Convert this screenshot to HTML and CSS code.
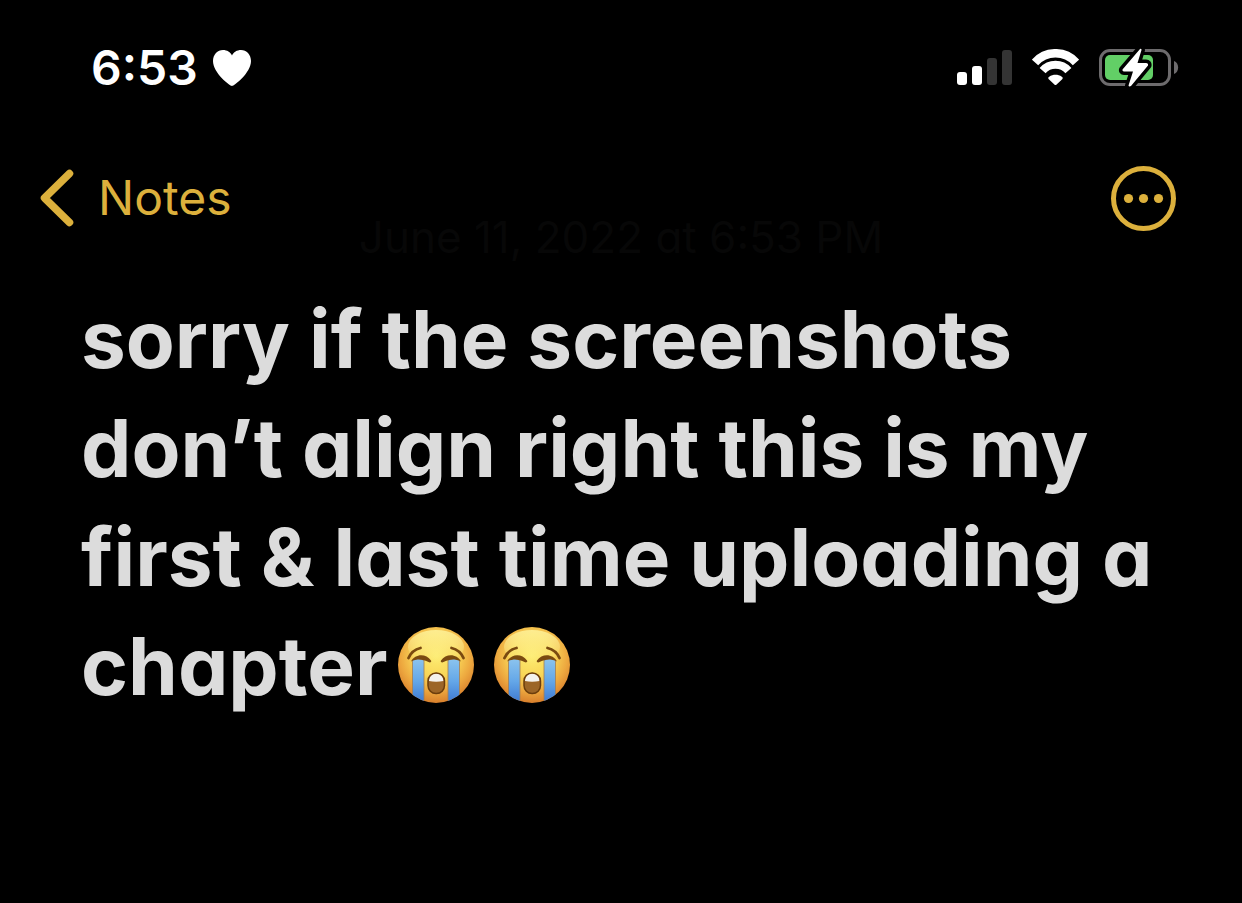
FILE: index.html
```html
<!DOCTYPE html>
<html lang="en">

<head>
    <meta charset="UTF-8">
    <meta name="viewport" content="width=device-width, initial-scale=1">
    <title>Notes</title>
    <link rel="stylesheet" href="styles.css">
</head>

<body>
    <div class="status-bar">
        <div class="clock">
            <span>6:53</span>
            <svg class="heart" width="40" height="38" viewBox="0 0 40 38" aria-hidden="true">
                <path d="M20 37C18 37 1 24 1 12C1 5.500 5.500 1 11 1C15 1 18.500 3.200 20 6.500C21.500 3.200 25 1 29 1C34.500 1 39 5.500 39 12C39 24 22 37 20 37Z" fill="#fff"/>
            </svg>
        </div>
        <div class="indicators">
            <svg width="55" height="36" viewBox="0 0 55 36" aria-hidden="true">
                <rect x="0" y="22" width="10" height="13" rx="3" fill="#fff"/>
                <rect x="15" y="16" width="10" height="19" rx="3" fill="#fff"/>
                <rect x="30" y="8" width="10" height="27" rx="3" fill="#343434"/>
                <rect x="45" y="0" width="10" height="35" rx="3" fill="#343434"/>
            </svg>
            <svg width="47" height="38" viewBox="0 0 47 38" aria-hidden="true">
                <g fill="none" stroke="#fff">
                    <path d="M3 13.400A27.500 27.500 0 0 1 44 13.400" stroke-width="8.500"/>
                    <path d="M10.600 21.600A17.200 17.200 0 0 1 36.400 21.600" stroke-width="8"/>
                </g>
                <path d="M16.800 30.200C15.900 29.300 16.200 28.400 17.200 27.800C21 25.200 26 25.200 29.800 27.800C30.800 28.400 31.100 29.300 30.200 30.200L24.600 35.500C23.900 36.200 23.100 36.200 22.400 35.500Z" fill="#fff"/>
            </svg>
            <svg width="80" height="44" viewBox="0 0 80 44" aria-hidden="true">
                <rect x="1.500" y="4.500" width="69" height="34" rx="9.500" fill="none" stroke="#6d6b6d" stroke-width="3"/>
                <rect x="6" y="9" width="48" height="25" rx="5" fill="#62cf66"/>
                <path d="M75 15C80.500 17 80.500 26 75 28Z" fill="#6d6b6d"/>
                <path d="M41 3L23.500 23.500Q23 25.500 25 25.500H34L29.500 39.500Q30 41 32 40L49 19.500Q49.500 17 47 17H38.500L42.500 4Q42.500 2 41 3Z" fill="#fff" stroke="#000" stroke-width="7" stroke-linejoin="round" paint-order="stroke"/>
            </svg>
        </div>
    </div>

    <nav class="nav">
        <a class="back" href="#">
            <svg width="34" height="58" viewBox="0 0 34 58" aria-hidden="true">
                <path d="M29.500 4.500L4.500 29L29.500 53.500" fill="none" stroke="currentColor" stroke-width="7.500" stroke-linecap="round" stroke-linejoin="round"/>
            </svg>
            <span>Notes</span>
        </a>
        <button class="more" type="button" aria-label="More">
            <svg width="66" height="66" viewBox="0 0 66 66" aria-hidden="true">
                <circle cx="33.500" cy="33.500" r="30" fill="none" stroke="currentColor" stroke-width="5"/>
                <g fill="currentColor">
                    <circle cx="18.500" cy="33.500" r="4.600"/>
                    <circle cx="33.500" cy="33.500" r="4.600"/>
                    <circle cx="48.500" cy="33.500" r="4.600"/>
                </g>
            </svg>
        </button>
    </nav>

    <main class="note">
        <p class="date">June 11, 2022 at 6:53 PM</p>
        <h1 class="text">sorry if the screenshots don’t align right this is my first &amp; last time uploading a <span class="last">chapter<svg class="emoji" viewBox="0 0 78 78" role="img" aria-label="crying"><use href="#sob"/></svg><svg class="emoji" viewBox="0 0 78 78" role="img" aria-label="crying"><use href="#sob"/></svg></span></h1>
    </main>

    <!-- crying face, used twice above -->
    <svg class="defs" width="0" height="0" aria-hidden="true">
        <defs>
            <radialGradient id="face" cx="50%" cy="38%" r="62%">
                <stop offset="0" stop-color="#fdec70"/>
                <stop offset=".45" stop-color="#f9d658"/>
                <stop offset=".75" stop-color="#eda83f"/>
                <stop offset="1" stop-color="#d87f2c"/>
            </radialGradient>
            <linearGradient id="shine" x1="0" y1="0" x2="0" y2="1">
                <stop offset="0" stop-color="#fff6a0" stop-opacity=".8"/>
                <stop offset="1" stop-color="#fff6a0" stop-opacity="0"/>
            </linearGradient>
            <linearGradient id="tear" x1="0" y1="0" x2="0" y2="1">
                <stop offset="0" stop-color="#8cc4ee"/>
                <stop offset=".5" stop-color="#64a7e8"/>
                <stop offset="1" stop-color="#3b76d0"/>
            </linearGradient>
            <clipPath id="round"><circle cx="39" cy="39" r="38"/></clipPath>
            <g id="sob">
                <circle cx="39" cy="39" r="38" fill="url(#face)"/>
                <ellipse cx="39" cy="21" rx="28" ry="17" fill="url(#shine)"/>
                <g clip-path="url(#round)">
                    <path d="M15.500 34Q21 31 27 34V78H15.500Z" fill="url(#tear)" stroke="#a17d55" stroke-width=".8"/>
                    <path d="M51 34Q57 31 62.500 34V78H51Z" fill="url(#tear)" stroke="#a17d55" stroke-width=".8"/>
                </g>
                <g fill="none" stroke="#7a4a10" stroke-linecap="round">
                    <path d="M11.500 32Q15 24 23.500 22" stroke-width="2.800"/>
                    <path d="M66.500 32Q63 24 54.500 22" stroke-width="2.800"/>
                </g>
                <path d="M14 35.500C18 27.500 29 27 34 34.500C35 36 33 37 31.500 36C26 33 20 32.500 14 35.500Z" fill="#7a4a10"/>
                <path d="M64 35.500C60 27.500 49 27 44 34.500C43 36 45 37 46.500 36C52 33 58 32.500 64 35.500Z" fill="#7a4a10"/>
                <rect x="31" y="47" width="16.500" height="20.500" rx="8" fill="#9c6527"/>
                <path d="M32 55C32 45 46 45 46.500 55Q39 56.500 32 55Z" fill="#f4f2ee"/>
                <rect x="31" y="47" width="16.500" height="20.500" rx="8" fill="none" stroke="#6b3d0c" stroke-width="1.500"/>
            </g>
        </defs>
    </svg>
</body>

</html>
```

FILE: styles.css
```css
body {
    margin: 0;
    background: #000;
    color: #fff;
    font-family: Inter, "Liberation Sans", sans-serif;
    font-feature-settings: "cv11";
}

.status-bar,
.nav {
    display: flex;
    align-items: center;
    justify-content: space-between;
}

.status-bar {
    height: 136px;
    padding: 0 63px 0 91px;
}

.clock {
    display: flex;
    align-items: center;
    gap: 14px;
    font-size: 48px;
    line-height: 60px;
    font-weight: 600;
}

.heart {
    display: block;
}

.indicators {
    display: flex;
    align-items: center;
    gap: 20px;
}

.nav {
    height: 66px;
    padding: 29px 66px 0 40px;
    color: #dcb03c;
}

.back {
    display: flex;
    align-items: center;
    gap: 24px;
    color: inherit;
    font-size: 48px;
    line-height: 60px;
    text-decoration: none;
}

.more {
    padding: 0;
    border: 0;
    background: none;
    color: inherit;
}

.more svg,
.back svg {
    display: block;
}

.note {
    padding: 0 81px;
}

/* timestamp sits above the text, almost faded out */
.date {
    margin: -20px 0 0;
    color: #070707;
    font-size: 44px;
    line-height: 52px;
    text-align: center;
}

.text {
    margin: 21px 0 0;
    color: #dcdcdc;
    font-size: 80px;
    line-height: 109px;
    font-weight: 700;
}

.last {
    white-space: nowrap;
}

.emoji {
    width: 78px;
    height: 78px;
    margin: 0 8px 0 10px;
    vertical-align: -9px;
}

.defs {
    position: absolute;
}
```
